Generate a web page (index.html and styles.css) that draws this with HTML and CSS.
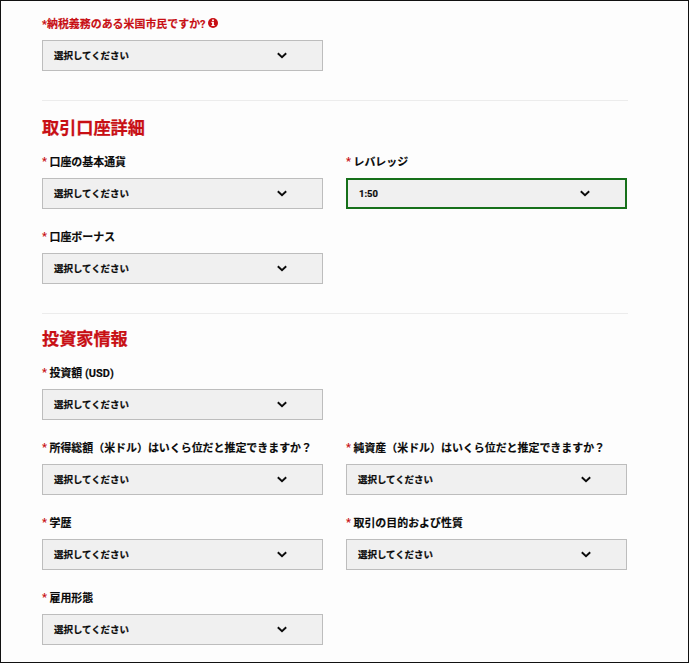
FILE: index.html
```html
<!DOCTYPE html>
<html lang="ja">
<head>
<meta charset="utf-8">
<title>口座開設</title>
<link rel="stylesheet" href="styles.css">
</head>
<body>
<svg class="defs" width="0" height="0">
  <symbol id="chevron" viewBox="0 0 10 7"><path d="M.8 1.2 5 5.2 9.2 1.2" fill="none" stroke="currentColor" stroke-width="1.9"/></symbol>
</svg>
<form class="form">
  <section class="grid first">
    <div class="field">
      <div class="label alert"><span>*納税義務のある米国市民ですか?</span><svg class="info" viewBox="0 0 10 10"><circle cx="5" cy="5" r="5" fill="currentColor"/><path d="M4.1 1.4h1.8v1.5H4.1zM3.4 3.8h2.5v3.1h.7v1.2H3.4V6.9h.7V5h-.7z" fill="#fff"/></svg></div>
      <div class="select"><span>選択してください</span><svg class="chevron"><use href="#chevron"/></svg></div>
    </div>
  </section>

  <section class="section account">
    <h2>取引口座詳細</h2>
    <div class="grid">
      <div class="field">
        <div class="label"><i>*</i><span>口座の基本通貨</span></div>
        <div class="select"><span>選択してください</span><svg class="chevron"><use href="#chevron"/></svg></div>
      </div>
      <div class="field">
        <div class="label"><i>*</i><span>レバレッジ</span></div>
        <div class="select valid"><span>1:50</span><svg class="chevron"><use href="#chevron"/></svg></div>
      </div>
      <div class="field">
        <div class="label"><i>*</i><span>口座ボーナス</span></div>
        <div class="select"><span>選択してください</span><svg class="chevron"><use href="#chevron"/></svg></div>
      </div>
    </div>
  </section>

  <section class="section investor">
    <h2>投資家情報</h2>
    <div class="grid">
      <div class="field wide">
        <div class="label"><i>*</i><span>投資額 (USD)</span></div>
        <div class="select"><span>選択してください</span><svg class="chevron"><use href="#chevron"/></svg></div>
      </div>
      <div class="field">
        <div class="label"><i>*</i><span>所得総額（米ドル）はいくら位だと推定できますか？</span></div>
        <div class="select"><span>選択してください</span><svg class="chevron"><use href="#chevron"/></svg></div>
      </div>
      <div class="field">
        <div class="label"><i>*</i><span>純資産（米ドル）はいくら位だと推定できますか？</span></div>
        <div class="select"><span>選択してください</span><svg class="chevron"><use href="#chevron"/></svg></div>
      </div>
      <div class="field">
        <div class="label"><i>*</i><span>学歴</span></div>
        <div class="select"><span>選択してください</span><svg class="chevron"><use href="#chevron"/></svg></div>
      </div>
      <div class="field">
        <div class="label"><i>*</i><span>取引の目的および性質</span></div>
        <div class="select"><span>選択してください</span><svg class="chevron"><use href="#chevron"/></svg></div>
      </div>
      <div class="field">
        <div class="label"><i>*</i><span>雇用形態</span></div>
        <div class="select"><span>選択してください</span><svg class="chevron"><use href="#chevron"/></svg></div>
      </div>
    </div>
  </section>
</form>
</body>
</html>
```
FILE: styles.css
```css
* {
  box-sizing: border-box;
}

body {
  margin: 0;
  height: 663px;
  overflow: hidden;
  border: 1px solid #111;
  background: #fdfdfd;
  color: #0a0a0a;
  font-family: Roboto, "Noto Sans CJK JP", sans-serif;
  font-weight: 700;
}

.defs {
  display: block;
}

.form {
  width: 586px;
  margin: 11px 0 0 41px;
}

.grid {
  display: grid;
  grid-template-columns: 281px 281px;
  column-gap: 23px;
  row-gap: 16px;
}

.wide {
  grid-column: 1 / -1;
  width: 281px;
}

.section {
  border-top: 1px solid #ececec;
}

.account {
  margin-top: 29px;
  padding-top: 15px;
}

.investor {
  margin-top: 29px;
  padding-top: 13px;
}

h2 {
  margin: 0 0 10px;
  height: 24px;
  line-height: 24px;
  font-size: 17.15px;
  font-weight: 700;
  color: #c80f14;
  -webkit-text-stroke: 0.25px currentColor;
}

.label {
  display: flex;
  align-items: center;
  height: 22px;
  margin-bottom: 6px;
  font-size: 10.95px;
  white-space: nowrap;
}

.label span {
  -webkit-text-stroke: 0.15px currentColor;
}

.label i {
  width: 7.5px;
  font-style: normal;
  color: #c80f14;
}

.alert {
  color: #c80f14;
}

.info {
  width: 10px;
  height: 10px;
  margin-left: 2px;
}

.select {
  display: flex;
  align-items: center;
  justify-content: space-between;
  height: 31px;
  padding: 0 35px 1px 11px;
  border: 1px solid #bdbdbd;
  background: #f0f0f0;
  font-size: 9.45px;
}

.select span {
  -webkit-text-stroke: 0.2px currentColor;
}

.valid {
  padding-bottom: 0;
  border: 2px solid #16701a;
}

.chevron {
  width: 10px;
  height: 7px;
}
```
